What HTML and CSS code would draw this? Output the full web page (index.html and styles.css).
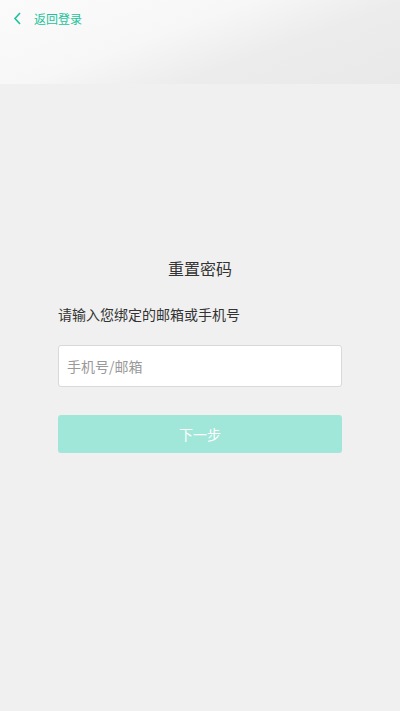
FILE: index.html
```html
<!DOCTYPE html>
<html lang="zh">
<head>
<meta charset="utf-8">
<link rel="stylesheet" href="styles.css">
</head>
<body>
<header class="top">
  <a class="back">
    <svg class="back-icon" width="9" height="13" viewBox="0 0 9 13"><path d="M7 1 L2 6.5 L7 12" fill="none" stroke="#1dc29c" stroke-width="1.6"/></svg>
    <span class="back-text">返回登录</span>
  </a>
</header>
<main class="main">
  <h1 class="title">重置密码</h1>
  <p class="label">请输入您绑定的邮箱或手机号</p>
  <div class="input">手机号/邮箱</div>
  <div class="btn">下一步</div>
</main>
</body>
</html>
```
FILE: styles.css
```css
html, body {
  margin: 0;
  padding: 0;
}
body {
  width: 400px;
  height: 711px;
  background: #eff0ef;
  font-family: "Noto Sans CJK SC", "Noto Sans", sans-serif;
  overflow: hidden;
}
.top {
  height: 84px;
  background: linear-gradient(160deg, #fbfbfb 0%, #f7f7f7 40%, #ececec 65%, #e9e9e9 100%);
  box-sizing: border-box;
  padding: 12px 0 0 13px;
}
.back {
  display: flex;
  align-items: center;
  height: 13px;
}
.back-icon {
  display: block;
}
.back-text {
  margin-left: 12px;
  font-size: 12px;
  line-height: 12px;
  color: #1dc29c;
}
.main {
  padding: 0 58px;
  display: flex;
  flex-direction: column;
}
.title {
  margin: 173px 0 0;
  text-align: center;
  font-size: 16px;
  font-weight: 400;
  line-height: 22px;
  color: #333;
}
.label {
  margin: 25px 0 0;
  font-size: 14px;
  line-height: 20px;
  color: #333;
}
.input {
  margin-top: 21px;
  height: 42px;
  box-sizing: border-box;
  background: #fff;
  border: 1px solid #d9d9d9;
  border-radius: 3px;
  padding-left: 8px;
  font-size: 14px;
  line-height: 40px;
  color: #999;
}
.btn {
  margin-top: 28px;
  height: 38px;
  background: #a0e6d9;
  border-radius: 3px;
  text-align: center;
  font-size: 14px;
  line-height: 38px;
  color: #fff;
}
```
